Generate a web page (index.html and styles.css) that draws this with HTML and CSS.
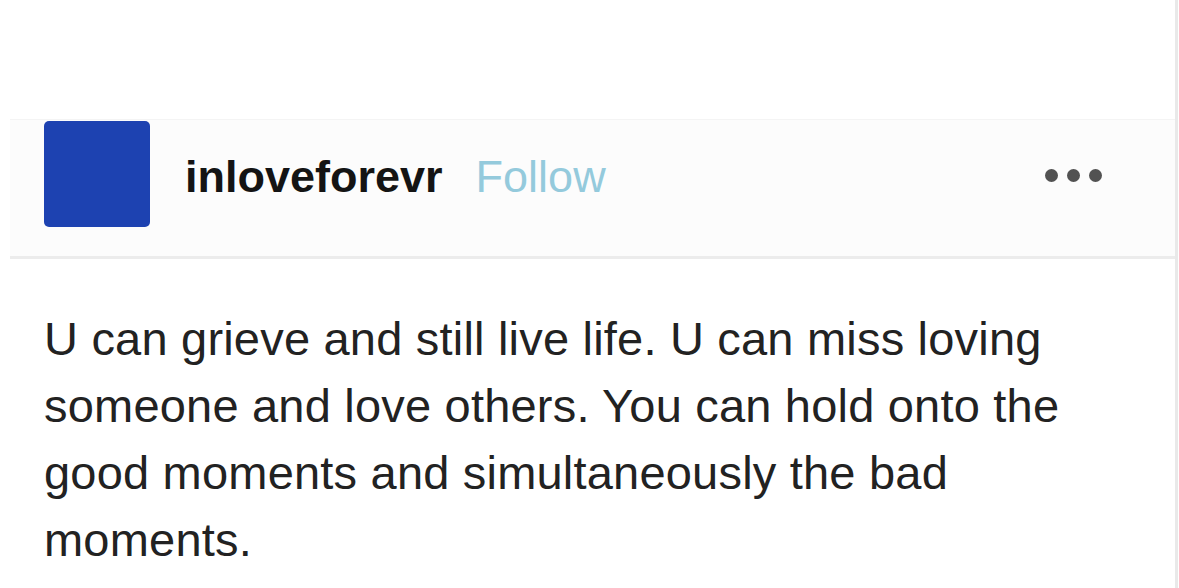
FILE: index.html
```html
<!DOCTYPE html>
<html>
<head>
<meta charset="utf-8">
<link rel="stylesheet" href="styles.css">
</head>
<body>
<div class="page">
  <div class="top"></div>
  <div class="header">
    <div class="avatar"></div>
    <span class="name">inloveforevr</span>
    <span class="follow">Follow</span>
    <div class="more"><span></span><span></span><span></span></div>
  </div>
  <div class="content">
    <p class="text">U can grieve and still live life. U can miss loving someone and love others. You can hold onto the good moments and simultaneously the bad moments.</p>
  </div>
</div>
</body>
</html>
```
FILE: styles.css
```css
html, body {
  margin: 0;
  padding: 0;
  background: #ffffff;
}
.page {
  width: 1175px;
  height: 588px;
  border-right: 3px solid #e9e9e9;
  overflow: hidden;
  font-family: "Liberation Sans", Arial, sans-serif;
}
.top {
  height: 119px;
}
.header {
  display: flex;
  align-items: center;
  margin-left: 10px;
  padding: 1px 73px 29px 34px;
  background: #fcfcfc;
  border-top: 1px solid #f4f4f4;
  border-bottom: 3px solid #ececec;
}
.avatar {
  width: 106px;
  height: 106px;
  background: #1d42b1;
  border-radius: 5px;
  flex: none;
}
.name {
  margin-left: 35px;
  margin-top: 5px;
  font-weight: bold;
  font-size: 45px;
  line-height: 52px;
  color: #141414;
}
.follow {
  margin-left: 33px;
  margin-top: 5px;
  font-size: 45px;
  line-height: 52px;
  color: #94cadc;
}
.more {
  margin-left: auto;
  display: flex;
  gap: 9px;
  margin-top: 2px;
}
.more span {
  width: 13px;
  height: 13px;
  border-radius: 50%;
  background: #525252;
}
.content {
  padding: 46px 0 0 44px;
}
.text {
  margin: 0;
  width: 1100px;
  font-size: 47px;
  line-height: 67px;
  letter-spacing: 0.2px;
  color: #222222;
}
```
